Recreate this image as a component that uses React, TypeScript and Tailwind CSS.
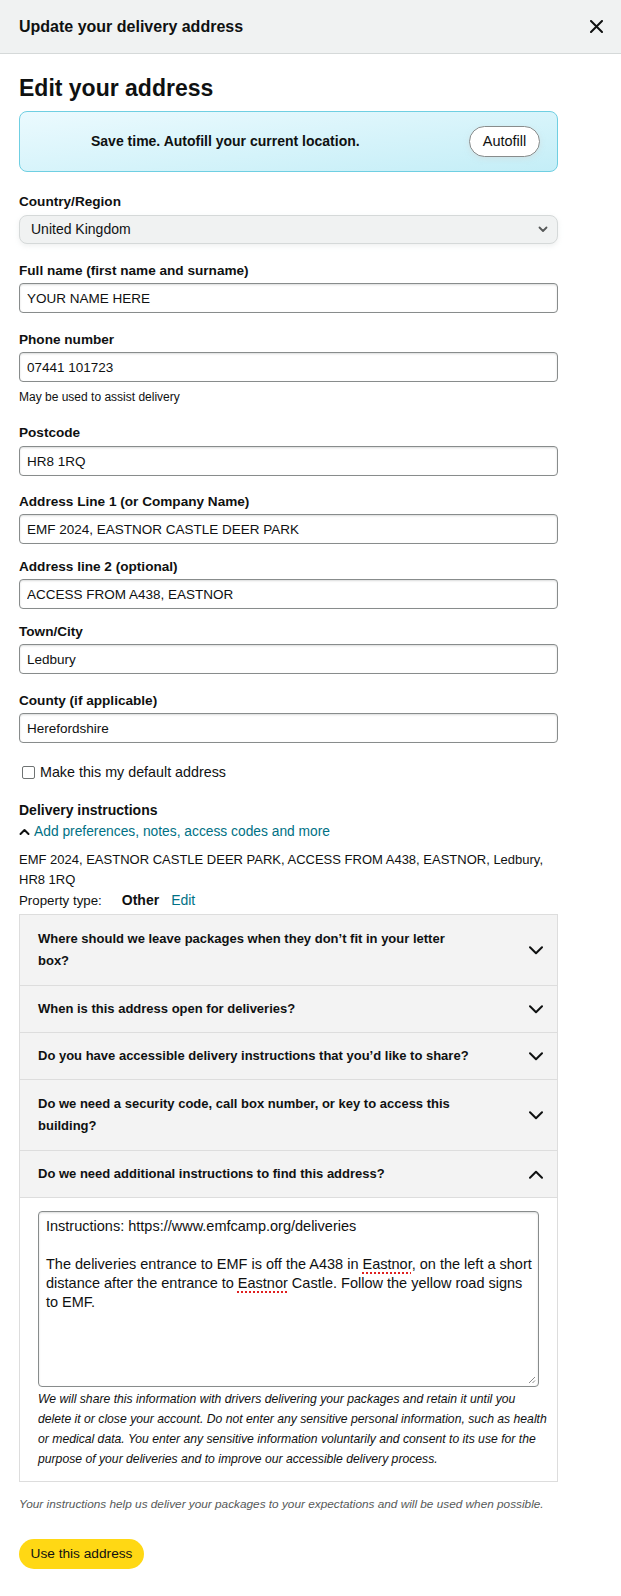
import React from "react";

function ChevronDown({ className = "" }: { className?: string }) {
  return (
    <svg className={className} width="14" height="9" viewBox="0 0 14 9" fill="none">
      <path d="M1 1.2L7 7.2L13 1.2" stroke="#0f1111" strokeWidth="2" strokeLinecap="round" strokeLinejoin="round" />
    </svg>
  );
}

function ChevronUp({ className = "" }: { className?: string }) {
  return (
    <svg className={className} width="14" height="9" viewBox="0 0 14 9" fill="none">
      <path d="M1 7.8L7 1.8L13 7.8" stroke="#0f1111" strokeWidth="2" strokeLinecap="round" strokeLinejoin="round" />
    </svg>
  );
}

function Label({ children, className = "" }: { children: React.ReactNode; className?: string }) {
  return <div className={"text-[13.6px] font-bold leading-[20px] " + className}>{children}</div>;
}

function TextInput({ value, className = "" }: { value: string; className?: string }) {
  return (
    <input
      readOnly
      defaultValue={value}
      className={
        "block h-[30px] w-full rounded-[4px] border border-[#888c8c] bg-white px-[7px] text-[13.5px] text-[#0f1111] shadow-[inset_0_1px_2px_rgba(15,17,17,0.15)] outline-none " +
        className
      }
    />
  );
}

function AccItem({ children, open = false, tall = false }: { children: React.ReactNode; open?: boolean; tall?: boolean }) {
  return (
    <div
      className={
        "flex items-center justify-between border-b border-[#dddddd] bg-[#f3f3f3] pl-[18px] pr-[14px] " +
        (tall ? "h-[71px]" : "h-[47px]")
      }
    >
      <div className="text-[13px] font-bold leading-[22px] text-[#0f1111]">{children}</div>
      {open ? <ChevronUp /> : <ChevronDown />}
    </div>
  );
}

export default function App() {
  return (
    <div className="min-h-[1596px] w-[621px] bg-white font-['Liberation_Sans',Arial,sans-serif] text-[#0f1111]">
      <header className="flex h-[54px] items-center justify-between border-b border-[#d5d9d9] bg-[#f0f2f2] pl-[19px] pr-[18px]">
        <h2 className="text-[16px] font-bold leading-[24px]">Update your delivery address</h2>
        <svg width="13" height="13" viewBox="0 0 13 13" fill="none">
          <path d="M1 1L12 12M12 1L1 12" stroke="#0f1111" strokeWidth="2" strokeLinecap="round" />
        </svg>
      </header>

      <main className="w-[558px] pb-[27px] pl-[19px]">
        <h1 className="mt-[20px] text-[23px] font-bold leading-[28px]">Edit your address</h1>

        <div className="mt-[9px] flex h-[61px] items-center justify-between rounded-[8px] border border-[#6fcfe2] bg-gradient-to-br from-[#ebfafe] to-[#c4eef7] pl-[71px] pr-[17px]">
          <span className="text-[14px] font-bold">Save time. Autofill your current location.</span>
          <button className="flex h-[31px] w-[71px] items-center justify-center rounded-full border border-[#888c8c] bg-white text-[14.5px] text-[#0f1111] shadow-[0_2px_5px_rgba(213,217,217,0.5)]">
            Autofill
          </button>
        </div>

        <Label className="mt-[20px]">Country/Region</Label>
        <div className="mt-[3px] flex h-[29px] items-center justify-between rounded-[8px] border border-[#d5d9d9] bg-[#f0f2f2] pl-[11px] pr-[9px] shadow-[0_2px_5px_rgba(213,217,217,0.4)]">
          <span className="text-[14px]">United Kingdom</span>
          <svg width="10" height="7" viewBox="0 0 10 7" fill="none">
            <path d="M1.5 1.5L5 5L8.5 1.5" stroke="#565959" strokeWidth="1.8" strokeLinecap="round" strokeLinejoin="round" />
          </svg>
        </div>

        <Label className="mt-[17px]">Full name (first name and surname)</Label>
        <TextInput className="mt-[2px]" value="YOUR NAME HERE" />

        <Label className="mt-[17px]">Phone number</Label>
        <TextInput className="mt-[2px]" value="07441 101723" />
        <div className="mt-[7px] text-[12px] leading-[16px]">May be used to assist delivery</div>

        <Label className="mt-[18px]">Postcode</Label>
        <TextInput className="mt-[3px]" value="HR8 1RQ" />

        <Label className="mt-[16px]">Address Line 1 (or Company Name)</Label>
        <TextInput className="mt-[2px]" value="EMF 2024, EASTNOR CASTLE DEER PARK" />

        <Label className="mt-[13px]">Address line 2 (optional)</Label>
        <TextInput className="mt-[2px]" value="ACCESS FROM A438, EASTNOR" />

        <Label className="mt-[13px]">Town/City</Label>
        <TextInput className="mt-[2px]" value="Ledbury" />

        <Label className="mt-[17px]">County (if applicable)</Label>
        <TextInput className="mt-[2px]" value="Herefordshire" />

        <div className="mt-[19px] flex h-[20px] items-center pl-[3px]">
          <span className="block h-[13px] w-[13px] rounded-[2px] border border-[#6f7373] bg-white" />
          <span className="ml-[5px] text-[14.3px] leading-[20px]">Make this my default address</span>
        </div>

        <div className="mt-[18px] text-[14px] font-bold leading-[20px]">Delivery instructions</div>
        <div className="mt-[2px] flex h-[20px] items-center text-[13.8px] leading-[20px]">
          <svg className="mr-[4px]" width="11" height="8" viewBox="0 0 11 8" fill="none">
            <path d="M1.5 6L5.5 2L9.5 6" stroke="#0f1111" strokeWidth="2" strokeLinecap="round" strokeLinejoin="round" />
          </svg>
          <span className="text-[#007185]">Add preferences, notes, access codes and more</span>
        </div>

        <div className="mt-[8px] text-[13px] leading-[20px]">
          EMF 2024, EASTNOR CASTLE DEER PARK, ACCESS FROM A438, EASTNOR, Ledbury,
          <br />
          HR8 1RQ
        </div>
        <div className="text-[13.3px] leading-[20px]">
          <span>Property type:</span>
          <span className="ml-[20px] text-[14px] font-bold">Other</span>
          <span className="ml-[12px] text-[14px] text-[#007185]">Edit</span>
        </div>

        <div className="mt-[3px] border-x border-t border-[#dddddd]">
          <AccItem tall>
            Where should we leave packages when they don’t fit in your letter
            <br />
            box?
          </AccItem>
          <AccItem>When is this address open for deliveries?</AccItem>
          <AccItem>Do you have accessible delivery instructions that you’d like to share?</AccItem>
          <AccItem tall>
            Do we need a security code, call box number, or key to access this
            <br />
            building?
          </AccItem>
          <AccItem open>Do we need additional instructions to find this address?</AccItem>
          <div className="border-b border-[#dddddd] bg-white px-[18px] pb-[12px] pt-[13px]">
            <div className="relative h-[176px] w-full rounded-[4px] border border-[#888c8c] bg-white pl-[7px] pt-[5px] text-[14.5px] leading-[19px] shadow-[inset_0_1px_2px_rgba(15,17,17,0.15)]">
              <div className="whitespace-nowrap">Instructions: https://www.emfcamp.org/deliveries</div>
              <div className="h-[19px]" />
              <div className="whitespace-nowrap">
                The deliveries entrance to EMF is off the A438 in{" "}
                <span className="underline decoration-[#e02020] decoration-dotted decoration-[1.5px] underline-offset-[3px]">Eastnor</span>, on the left a short
              </div>
              <div className="whitespace-nowrap">
                distance after the entrance to{" "}
                <span className="underline decoration-[#e02020] decoration-dotted decoration-[1.5px] underline-offset-[3px]">Eastnor</span> Castle. Follow the yellow road signs
              </div>
              <div className="whitespace-nowrap">to EMF.</div>
              <svg className="absolute bottom-[2px] right-[2px]" width="8" height="8" viewBox="0 0 8 8" fill="none">
                <path d="M7 1L1 7M7 4.5L4.5 7" stroke="#8a8a8a" strokeWidth="1" />
              </svg>
            </div>
            <div className="mt-[2px] whitespace-nowrap text-[12.2px] italic leading-[20px]">
              We will share this information with drivers delivering your packages and retain it until you
              <br />
              delete it or close your account. Do not enter any sensitive personal information, such as health
              <br />
              or medical data. You enter any sensitive information voluntarily and consent to its use for the
              <br />
              purpose of your deliveries and to improve our accessible delivery process.
            </div>
          </div>
        </div>

        <div className="mt-[14px] whitespace-nowrap text-[11.8px] italic leading-[16px] text-[#565959]">
          Your instructions help us deliver your packages to your expectations and will be used when possible.
        </div>

        <button className="mt-[27px] flex h-[30px] w-[125px] items-center justify-center rounded-full bg-[#ffd814] text-[13.7px] text-[#0f1111]">
          Use this address
        </button>
      </main>
    </div>
  );
}
